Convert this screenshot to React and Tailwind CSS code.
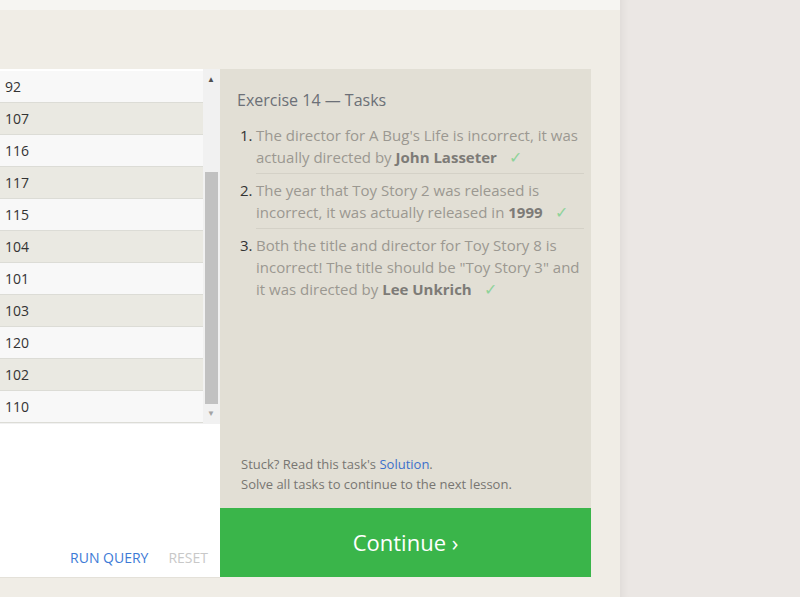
import React from "react";

const rows = [92, 107, 116, 117, 115, 104, 101, 103, 120, 102, 110];

function Check() {
  return <span className="ml-3 text-[16px] text-[#8fd39a] font-normal">✓</span>;
}

export default function App() {
  return (
    <div
      className="flex w-[800px] h-[597px] overflow-hidden"
      style={{ fontFamily: '"Open Sans", "Noto Sans", sans-serif' }}
    >
      {/* lesson column */}
      <div className="w-[620px] shrink-0 flex flex-col bg-[#f0ede6]">
        <div className="h-[10px] bg-[#f6f5f2]" />
        <div className="flex pt-[59px]">
          {/* results table */}
          <div className="w-[220px] h-[509px] flex flex-col bg-white border-b border-[#e4e1d9]">
            <div className="flex h-[355px] bg-[#f1f1f1]">
              <div className="w-[203px] flex flex-col">
                <div className="h-[2px] bg-white" />
                {rows.map((n, i) => (
                  <div
                    key={n}
                    className={`h-[32px] flex items-center pl-[5px] text-[14px] text-[#333] border-b border-[#dcdcd6] ${
                      i % 2 === 0 ? "bg-[#f8f8f8]" : "bg-[#eae9e2]"
                    }`}
                  >
                    {n}
                  </div>
                ))}
              </div>
              {/* scrollbar */}
              <div className="w-[16px] flex flex-col items-center bg-[#f1f1f1]">
                <div className="h-[17px] pt-[3px] flex items-center justify-center text-[8px] text-[#505050]">▲</div>
                <div className="h-[86px]" />
                <div className="w-[13px] h-[232px] bg-[#c1c1c1]" />
                <div className="h-[17px] flex items-center justify-center text-[8px] text-[#a3a3a3]">▼</div>
              </div>
              <div className="w-[1px] bg-[#f1f1f1]" />
            </div>
            <div className="flex-1 flex items-end justify-end gap-[20px] pr-[12px] pb-[9px] text-[14px]">
              <span className="text-[#3d7ad6]">RUN QUERY</span>
              <span className="text-[#c8c8c8]">RESET</span>
            </div>
          </div>

          {/* tasks panel */}
          <div className="w-[371px] h-[508px] flex flex-col bg-[#e2dfd5]">
            <div className="flex-1 flex flex-col pt-[19px] pl-[17px] pr-[7px]">
              <div className="text-[16px] leading-[24px] text-[#6c7077]">Exercise 14 — Tasks</div>
              <ol className="mt-[12px] pl-[3px] text-[15px] leading-[22px] text-[#9b9891]">
                <li className="flex">
                  <span className="w-[16px] shrink-0 text-[#333]">1.</span>
                  <div className="flex-1 pb-[5px] border-b border-[#d4d1c7]">
                    The director for A Bug's Life is incorrect, it was actually directed by{" "}
                    <b className="text-[#7d7b77]">John Lasseter</b>
                    <Check />
                  </div>
                </li>
                <li className="flex pt-[5px]">
                  <span className="w-[16px] shrink-0 text-[#333]">2.</span>
                  <div className="flex-1 pb-[5px] border-b border-[#d4d1c7]">
                    The year that Toy Story 2 was released is incorrect, it was actually released in{" "}
                    <b className="text-[#7d7b77]">1999</b>
                    <Check />
                  </div>
                </li>
                <li className="flex pt-[5px]">
                  <span className="w-[16px] shrink-0 text-[#333]">3.</span>
                  <div className="flex-1 pr-[4px]">
                    Both the title and director for Toy Story 8 is incorrect! The title should be "Toy Story 3" and it
                    was directed by <b className="text-[#7d7b77]">Lee Unkrich</b>
                    <Check />
                  </div>
                </li>
              </ol>
              <div className="mt-auto pl-[4px] pb-[14px] text-[13px] leading-[20px] text-[#787672]">
                <div>
                  Stuck? Read this task's <span className="text-[#3c6fcb]">Solution</span>.
                </div>
                <div>Solve all tasks to continue to the next lesson.</div>
              </div>
            </div>
            <div className="h-[69px] flex items-center justify-center bg-[#3ab54a] text-white text-[22px]">
              Continue ›
            </div>
          </div>
        </div>
      </div>

      {/* right empty area */}
      <div className="flex-1 bg-[#ebe7e4] shadow-[inset_10px_0_8px_-8px_rgba(0,0,0,0.06)]" />
    </div>
  );
}
